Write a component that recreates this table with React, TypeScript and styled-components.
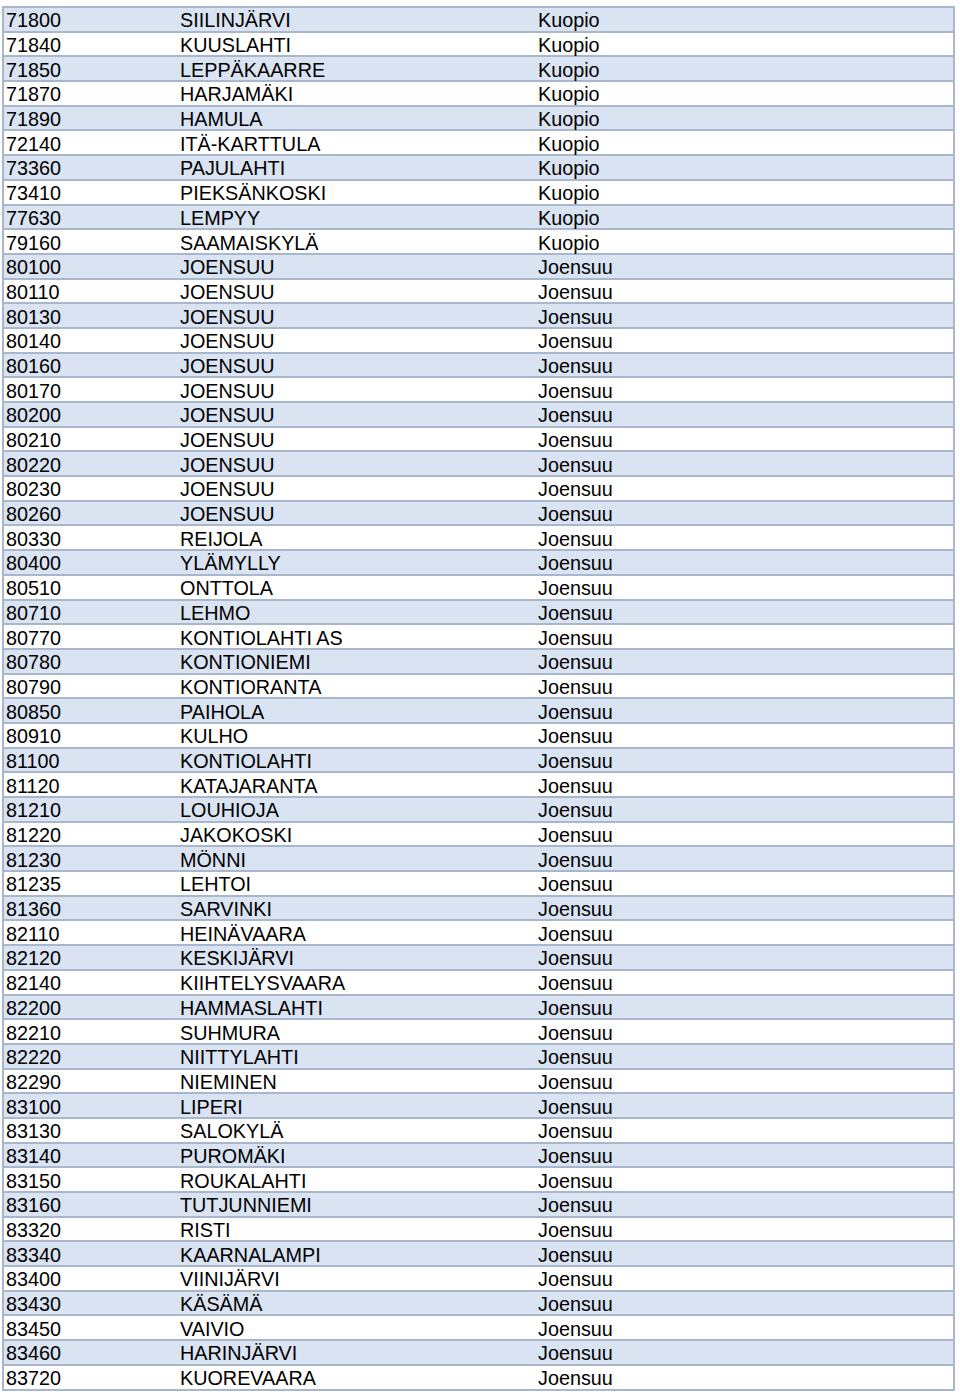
import React from 'react';
import styled, { createGlobalStyle } from 'styled-components';

const GlobalStyle = createGlobalStyle`
  html, body {
    margin: 0;
    padding: 0;
    background: #ffffff;
  }
`;

const Page = styled.div`
  padding: 6px 5px 0 2px;
  font-family: 'Liberation Sans', Arial, sans-serif;
`;

const Table = styled.div`
  display: flex;
  flex-direction: column;
  border: 2px solid #a9b7cd;
  border-bottom: none;
  width: 949px;
`;

const Row = styled.div<{ $shaded: boolean }>`
  display: grid;
  grid-template-columns: 174px 358px 1fr;
  align-items: center;
  height: 24.7px;
  box-sizing: border-box;
  border-bottom: 2px solid #a9b7cd;
  background: ${(p) => (p.$shaded ? '#d9e3f2' : '#ffffff')};
  padding-top: 2px;
`;

const Cell = styled.span`
  font-size: 19.8px;
  line-height: 20px;
  color: #000000;
  white-space: nowrap;
  padding-left: 2px;
`;

const rows: [string, string, string][] = [
  ['71800', 'SIILINJÄRVI', 'Kuopio'],
  ['71840', 'KUUSLAHTI', 'Kuopio'],
  ['71850', 'LEPPÄKAARRE', 'Kuopio'],
  ['71870', 'HARJAMÄKI', 'Kuopio'],
  ['71890', 'HAMULA', 'Kuopio'],
  ['72140', 'ITÄ-KARTTULA', 'Kuopio'],
  ['73360', 'PAJULAHTI', 'Kuopio'],
  ['73410', 'PIEKSÄNKOSKI', 'Kuopio'],
  ['77630', 'LEMPYY', 'Kuopio'],
  ['79160', 'SAAMAISKYLÄ', 'Kuopio'],
  ['80100', 'JOENSUU', 'Joensuu'],
  ['80110', 'JOENSUU', 'Joensuu'],
  ['80130', 'JOENSUU', 'Joensuu'],
  ['80140', 'JOENSUU', 'Joensuu'],
  ['80160', 'JOENSUU', 'Joensuu'],
  ['80170', 'JOENSUU', 'Joensuu'],
  ['80200', 'JOENSUU', 'Joensuu'],
  ['80210', 'JOENSUU', 'Joensuu'],
  ['80220', 'JOENSUU', 'Joensuu'],
  ['80230', 'JOENSUU', 'Joensuu'],
  ['80260', 'JOENSUU', 'Joensuu'],
  ['80330', 'REIJOLA', 'Joensuu'],
  ['80400', 'YLÄMYLLY', 'Joensuu'],
  ['80510', 'ONTTOLA', 'Joensuu'],
  ['80710', 'LEHMO', 'Joensuu'],
  ['80770', 'KONTIOLAHTI AS', 'Joensuu'],
  ['80780', 'KONTIONIEMI', 'Joensuu'],
  ['80790', 'KONTIORANTA', 'Joensuu'],
  ['80850', 'PAIHOLA', 'Joensuu'],
  ['80910', 'KULHO', 'Joensuu'],
  ['81100', 'KONTIOLAHTI', 'Joensuu'],
  ['81120', 'KATAJARANTA', 'Joensuu'],
  ['81210', 'LOUHIOJA', 'Joensuu'],
  ['81220', 'JAKOKOSKI', 'Joensuu'],
  ['81230', 'MÖNNI', 'Joensuu'],
  ['81235', 'LEHTOI', 'Joensuu'],
  ['81360', 'SARVINKI', 'Joensuu'],
  ['82110', 'HEINÄVAARA', 'Joensuu'],
  ['82120', 'KESKIJÄRVI', 'Joensuu'],
  ['82140', 'KIIHTELYSVAARA', 'Joensuu'],
  ['82200', 'HAMMASLAHTI', 'Joensuu'],
  ['82210', 'SUHMURA', 'Joensuu'],
  ['82220', 'NIITTYLAHTI', 'Joensuu'],
  ['82290', 'NIEMINEN', 'Joensuu'],
  ['83100', 'LIPERI', 'Joensuu'],
  ['83130', 'SALOKYLÄ', 'Joensuu'],
  ['83140', 'PUROMÄKI', 'Joensuu'],
  ['83150', 'ROUKALAHTI', 'Joensuu'],
  ['83160', 'TUTJUNNIEMI', 'Joensuu'],
  ['83320', 'RISTI', 'Joensuu'],
  ['83340', 'KAARNALAMPI', 'Joensuu'],
  ['83400', 'VIINIJÄRVI', 'Joensuu'],
  ['83430', 'KÄSÄMÄ', 'Joensuu'],
  ['83450', 'VAIVIO', 'Joensuu'],
  ['83460', 'HARINJÄRVI', 'Joensuu'],
  ['83720', 'KUOREVAARA', 'Joensuu'],
];

const App = () => {
  return (
    <Page>
      <GlobalStyle />
      <Table>
        {rows.map(([code, place, city], i) => (
          <Row key={code} $shaded={i % 2 === 0}>
            <Cell>{code}</Cell>
            <Cell>{place}</Cell>
            <Cell>{city}</Cell>
          </Row>
        ))}
      </Table>
    </Page>
  );
};

export default App;
